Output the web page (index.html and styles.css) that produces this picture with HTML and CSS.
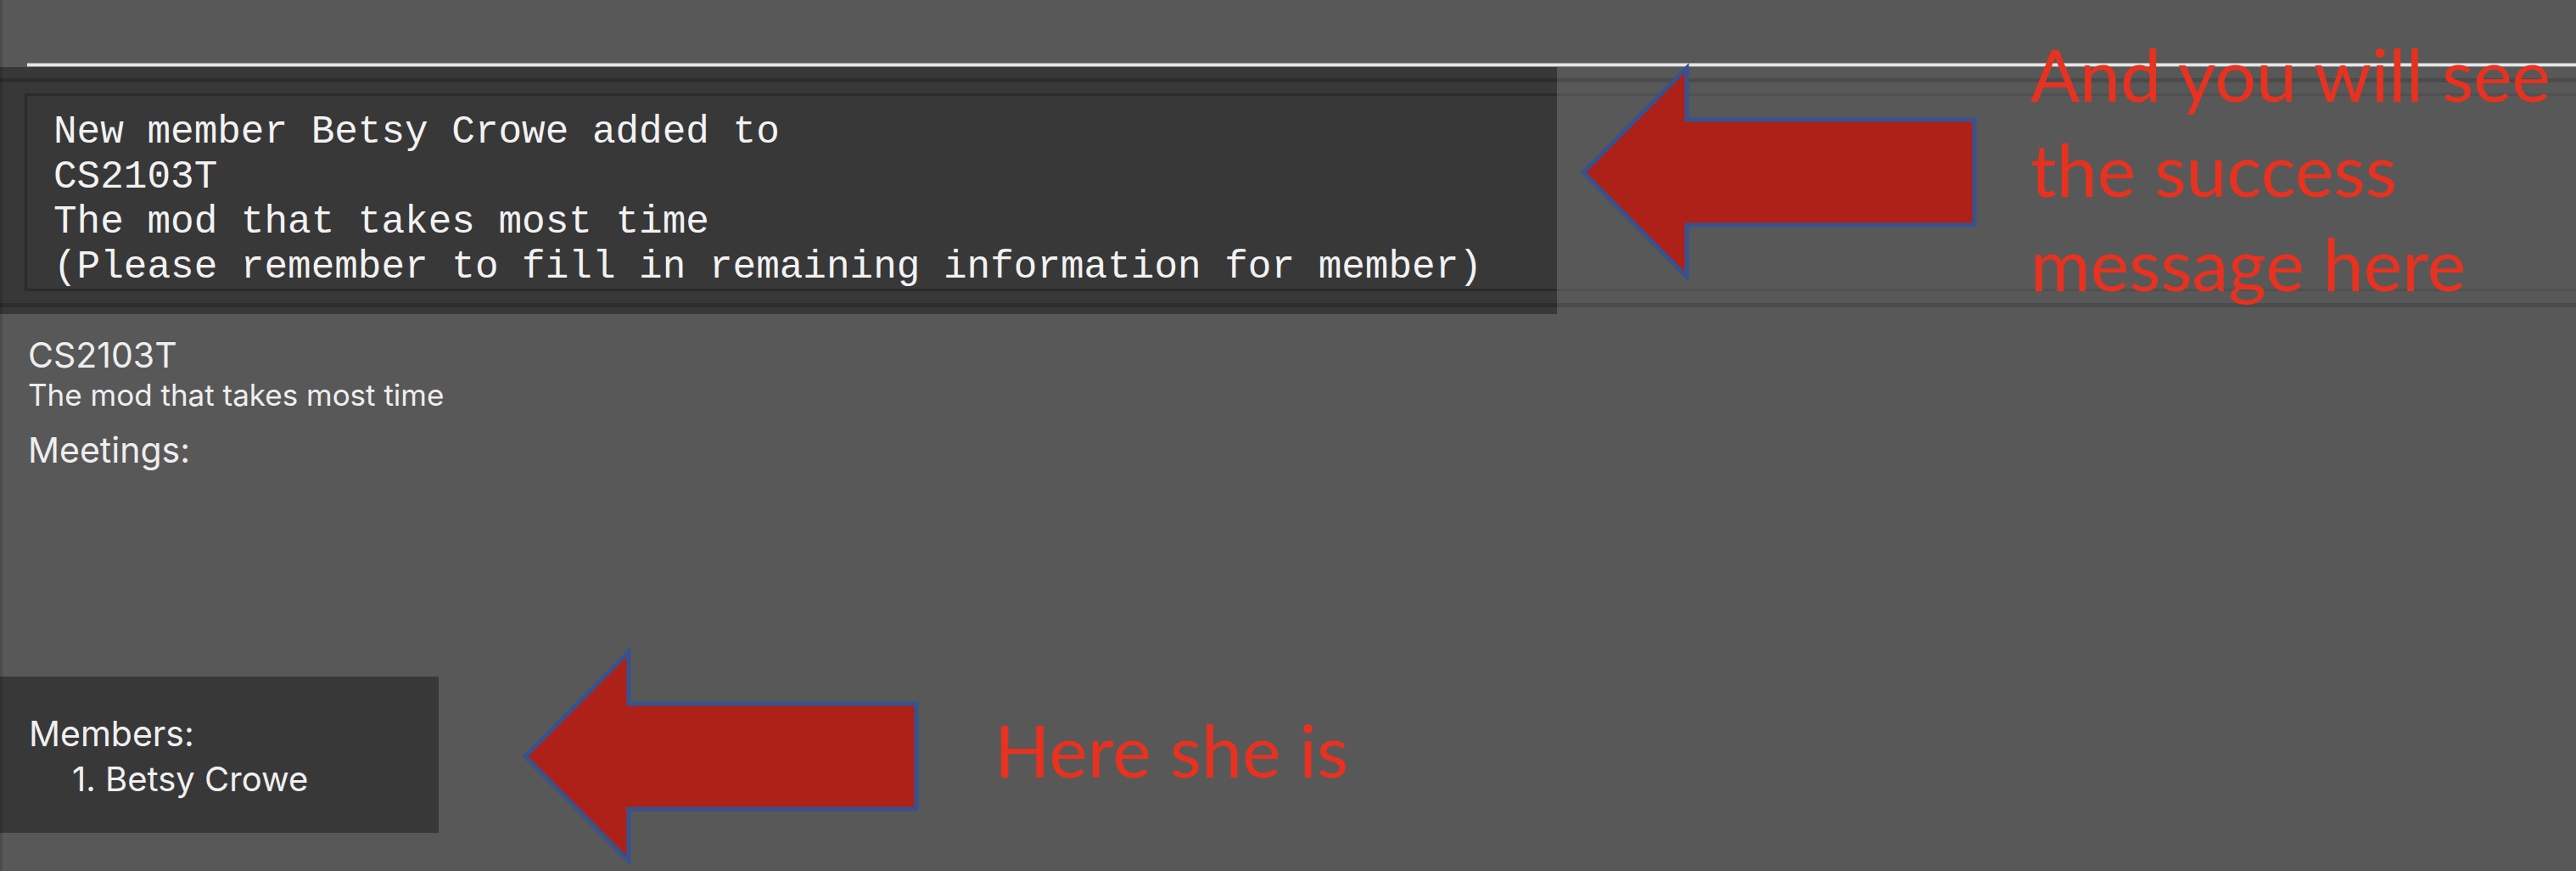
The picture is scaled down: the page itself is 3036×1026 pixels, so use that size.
FILE: index.html
```html
<!DOCTYPE html>
<html lang="en">
<head>
<meta charset="utf-8">
<title>Module view</title>
<link rel="stylesheet" href="styles.css">
</head>
<body>
<div class="app">
  <div class="top-space"></div>
  <div class="divider"></div>

  <section class="result">
    <div class="result-main">
      <div class="frame">
        <div class="textbox">New member Betsy Crowe added to
CS2103T
The mod that takes most time
(Please remember to fill in remaining information for member)</div>
      </div>
    </div>
    <div class="result-side">
      <div class="frame frame-side">
        <div class="textbox-side"></div>
      </div>
    </div>
  </section>

  <section class="module">
    <div class="module-head">
      <div class="module-title">CS2103T</div>
      <div class="module-desc">The mod that takes most time</div>
      <div class="module-label">Meetings:</div>
    </div>
    <div class="members">
      <div class="members-label">Members:</div>
      <div class="member-item">1. Betsy Crowe</div>
    </div>
  </section>

  <svg class="arrow arrow-top" viewBox="0 0 481 266" width="481" height="266" aria-hidden="true">
    <polygon points="10,133 132,10 132,71 471,71 471,195 132,195 132,256" fill="#ae2119" stroke="#36528f" stroke-width="5"/>
  </svg>
  <div class="note note-top">And you will see<br>the success<br>message here</div>

  <svg class="arrow arrow-bottom" viewBox="0 0 481 266" width="481" height="266" aria-hidden="true">
    <polygon points="10,133 132,10 132,71 471,71 471,195 132,195 132,256" fill="#ae2119" stroke="#36528f" stroke-width="5"/>
  </svg>
  <div class="note note-bottom">Here she is</div>
</div>
</body>
</html>
```

FILE: styles.css
```css
html, body {
  margin: 0;
  padding: 0;
}

body {
  background: #585858;
  overflow: hidden;
}

.app {
  position: relative;
  width: 3036px;
  height: 1026px;
  background: #585858;
  overflow: hidden;
  font-family: "Inter", "Liberation Sans", sans-serif;
}

.app::before {
  content: "";
  position: absolute;
  left: 0;
  top: 0;
  bottom: 0;
  width: 3px;
  background: rgba(0, 0, 0, 0.14);
  z-index: 5;
}

.top-space {
  height: 74px;
}

.divider {
  margin-left: 32px;
  height: 3px;
  background: #e6e6e6;
  border-top: 1px solid #a4a4a4;
  border-bottom: 1px solid #8c8c8c;
}

/* result display */
.result {
  display: flex;
  height: 291px;
}

.result-main {
  width: 1835px;
  flex: none;
  background: #383838;
  padding-top: 13px;
  box-sizing: border-box;
}

.result-side {
  flex: 1;
  padding-top: 13px;
  box-sizing: border-box;
}

.frame {
  border-top: 5px solid #2d2d2d;
  border-bottom: 5px solid #2d2d2d;
  padding: 13px 0 14px;
}

.frame-side {
  border-top-color: #4b4b4b;
  border-bottom-color: #4b4b4b;
}

.textbox {
  margin-left: 29px;
  height: 233px;
  border: 3px solid #2b2b2b;
  border-right: none;
  padding: 17px 0 0 31px;
  box-sizing: border-box;
  font-family: "Liberation Mono", "DejaVu Sans Mono", monospace;
  font-size: 46px;
  line-height: 53px;
  color: #f2f2f2;
  white-space: pre;
}

.textbox-side {
  height: 233px;
  border-top: 3px solid #505050;
  border-bottom: 3px solid #505050;
  box-sizing: border-box;
}

/* module details */
.module {
  padding-top: 24px;
  color: #eeeeee;
}

.module-head {
  padding-left: 33px;
}

.module-title {
  font-size: 41px;
  line-height: 49px;
}

.module-desc {
  font-size: 35px;
  line-height: 44px;
}

.module-label {
  margin-top: 18px;
  font-size: 41px;
  line-height: 50px;
}

.members {
  margin-top: 242px;
  width: 517px;
  height: 184px;
  background: #383838;
  padding: 41px 0 0 34px;
  box-sizing: border-box;
  color: #f0f0f0;
}

.members-label {
  font-size: 41px;
  line-height: 52px;
}

.member-item {
  margin-top: 3px;
  padding-left: 51px;
  font-size: 40px;
  line-height: 50px;
}

/* annotations */
.arrow {
  position: absolute;
  z-index: 10;
}

.arrow-top {
  left: 1856px;
  top: 70px;
}

.arrow-bottom {
  left: 609px;
  top: 758px;
}

.note {
  position: absolute;
  z-index: 10;
  font-family: "Lato", "Open Sans", sans-serif;
  font-size: 86px;
  line-height: 111.5px;
  color: #e8321f;
  white-space: nowrap;
}

.note-top {
  left: 2393px;
  top: 31px;
}

.note-bottom {
  left: 1172px;
  top: 827px;
}
```
